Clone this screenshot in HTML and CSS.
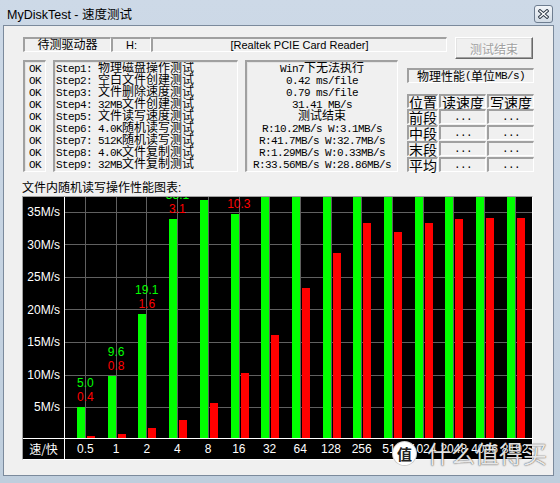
FILE: index.html
```html
<!DOCTYPE html>
<html lang="zh-CN">
<head>
<meta charset="utf-8">
<title>MyDiskTest - 速度测试</title>
<link rel="stylesheet" href="styles.css">
</head>
<body>
<div class="window">
  <div class="titlebar">
    <span class="title">MyDiskTest - 速度测试</span>
    <span class="close"><svg width="11" height="10" viewBox="0 0 11 10"><path d="M2 2L9 8M9 2L2 8" stroke="#2e3a48" stroke-width="3.4" stroke-linecap="square"/><path d="M2 2L9 8M9 2L2 8" stroke="#fff" stroke-width="1.4" stroke-linecap="square"/></svg></span>
  </div>
  <div class="client">
    <div class="row1">
      <div class="sunk lbl l1">待测驱动器</div>
      <div class="sunk lbl l2">H:</div>
      <div class="sunk lbl l3">[Realtek PCIE Card Reader]</div>
      <div class="btn">测试结束</div>
    </div>
    <div class="row2">
      <div class="box okbox mono">
        <div class="ln">OK</div><div class="ln">OK</div><div class="ln">OK</div>
        <div class="ln">OK</div><div class="ln">OK</div><div class="ln">OK</div>
        <div class="ln">OK</div><div class="ln">OK</div><div class="ln">OK</div>
      </div>
      <div class="box steps mono">
        <div class="ln">Step1: <span class="c">物理磁盘操作测试</span></div>
        <div class="ln">Step2: <span class="c">空白文件创建测试</span></div>
        <div class="ln">Step3: <span class="c">文件删除速度测试</span></div>
        <div class="ln">Step4: 32MB<span class="c">文件创建测试</span></div>
        <div class="ln">Step5: <span class="c">文件读写速度测试</span></div>
        <div class="ln">Step6: 4.0K<span class="c">随机读写测试</span></div>
        <div class="ln">Step7: 512K<span class="c">随机读写测试</span></div>
        <div class="ln">Step8: 4.0K<span class="c">文件复制测试</span></div>
        <div class="ln">Step9: 32MB<span class="c">文件复制测试</span></div>
      </div>
      <div class="box results mono">
        <div class="ln">Win7<span class="c">下无法执行</span></div>
        <div class="ln">0.42 ms/file</div>
        <div class="ln">0.79 ms/file</div>
        <div class="ln">31.41 MB/s</div>
        <div class="ln"><span class="c">测试结束</span></div>
        <div class="ln">R:10.2MB/s W:3.1MB/s</div>
        <div class="ln">R:41.7MB/s W:32.7MB/s</div>
        <div class="ln">R:1.29MB/s W:0.33MB/s</div>
        <div class="ln">R:33.56MB/s W:28.86MB/s</div>
      </div>
      <div class="phys">
        <div class="sunk physlbl mono"><span class="c">物理性能</span>(<span class="c">单位</span>MB/s)</div>
        <div class="ptable">
          <div class="sunk th left">位置</div>
          <div class="sunk th">读速度</div>
          <div class="sunk th">写速度</div>
          <div class="sunk th left">前段</div>
          <div class="sunk td mono">...</div>
          <div class="sunk td mono">...</div>
          <div class="sunk th left">中段</div>
          <div class="sunk td mono">...</div>
          <div class="sunk td mono">...</div>
          <div class="sunk th left">末段</div>
          <div class="sunk td mono">...</div>
          <div class="sunk td mono">...</div>
          <div class="sunk th left">平均</div>
          <div class="sunk td mono">...</div>
          <div class="sunk td mono">...</div>
        </div>
      </div>
    </div>
    <div class="ctitle">文件内随机读写操作性能图表:</div>
    <div class="chart">
      <div class="ylabs">
        <div>35M/s</div><div>30M/s</div><div>25M/s</div><div>20M/s</div>
        <div>15M/s</div><div>10M/s</div><div>5M/s</div>
      </div>
      <div class="vaxis"></div>
      <div class="plot">
        <div class="col"><div class="lab gv">5.0</div><div class="lab rv">0.4</div><div class="bars" style="height:31px"><div class="bar g"></div><div class="bar r" style="height:2px"></div></div></div>
        <div class="col"><div class="lab gv">9.6</div><div class="lab rv">0.8</div><div class="bars" style="height:62px"><div class="bar g"></div><div class="bar r" style="height:4px"></div></div></div>
        <div class="col"><div class="lab gv">19.1</div><div class="lab rv">1.6</div><div class="bars" style="height:124px"><div class="bar g"></div><div class="bar r" style="height:10px"></div></div></div>
        <div class="col"><div class="lab gv">33.1</div><div class="lab rv">3.1</div><div class="bars" style="height:219px"><div class="bar g"></div><div class="bar r" style="height:18px"></div></div></div>
        <div class="col"><div class="lab gv"></div><div class="lab rv"></div><div class="bars" style="height:238px"><div class="bar g"></div><div class="bar r" style="height:35px"></div></div></div>
        <div class="col"><div class="lab gv"></div><div class="lab rv">10.3</div><div class="bars" style="height:224px"><div class="bar g"></div><div class="bar r" style="height:65px"></div></div></div>
        <div class="col"><div class="bars" style="height:241px"><div class="bar g"></div><div class="bar r" style="height:103px"></div></div></div>
        <div class="col"><div class="bars" style="height:241px"><div class="bar g"></div><div class="bar r" style="height:150px"></div></div></div>
        <div class="col"><div class="bars" style="height:241px"><div class="bar g"></div><div class="bar r" style="height:185px"></div></div></div>
        <div class="col"><div class="bars" style="height:241px"><div class="bar g"></div><div class="bar r" style="height:215px"></div></div></div>
        <div class="col"><div class="bars" style="height:241px"><div class="bar g"></div><div class="bar r" style="height:206px"></div></div></div>
        <div class="col"><div class="bars" style="height:241px"><div class="bar g"></div><div class="bar r" style="height:215px"></div></div></div>
        <div class="col"><div class="bars" style="height:241px"><div class="bar g"></div><div class="bar r" style="height:219px"></div></div></div>
        <div class="col"><div class="bars" style="height:241px"><div class="bar g"></div><div class="bar r" style="height:220px"></div></div></div>
        <div class="col"><div class="bars" style="height:241px"><div class="bar g"></div><div class="bar r" style="height:220px"></div></div></div>
      </div>
      <div class="haxis"></div>
      <div class="corner">速/快</div>
      <div class="xlabs">
        <div>0.5</div><div>1</div><div>2</div><div>4</div><div>8</div><div>16</div><div>32</div><div>64</div>
        <div>128</div><div>256</div><div>512</div><div>1024</div><div>2048</div><div>4096</div><div>8192</div>
      </div>
    </div>
  </div>
  <div class="wm">
    <span class="wm-logo">值</span>
    <span class="wm-text">什么值得买</span>
  </div>
</div>
</body>
</html>
```
FILE: styles.css
```css
* { box-sizing: border-box; margin: 0; padding: 0; }
html, body { width: 560px; height: 483px; overflow: hidden; background: #c4d2e1; }
body { font-family: "Liberation Sans", "Noto Sans CJK SC", sans-serif; font-size: 12px; color: #000; }

.window {
  position: relative;
  width: 560px; height: 483px;
  display: flex; flex-direction: column;
  background: linear-gradient(#cdd9e7, #bfcedd);
}
.titlebar {
  height: 25px; flex: none;
  display: flex; align-items: center;
  padding: 0 7px;
}
.title { flex: 1; font-size: 12.5px; padding-top: 2px; }
.close {
  width: 19px; height: 18px; margin-top: 3px;
  border: 1px solid #6e7d90; border-radius: 3px;
  background: linear-gradient(#f2f5f9, #d2dbe5);
  display: flex; align-items: center; justify-content: center;
}

.client {
  flex: 1;
  margin: 0 6px 7px 3px;
  border: 1px solid #7b8a9c;
  background: #f0f0f0;
  padding: 11px 0 0 18px;
}

.sunk {
  border-style: solid;
  border-width: 2px 1px 1px 2px;
  border-color: #a0a0a0 #fff #fff #a0a0a0;
}

.row1 { display: flex; align-items: flex-start; height: 22px; margin-left: 1px; }
.lbl {
  height: 15px; line-height: 12px;
  display: flex; align-items: center; justify-content: center;
  font-size: 12px; white-space: nowrap;
}
.l1 { width: 88px; }
.l2 { width: 40px; font-size: 11px; }
.l3 { width: 296px; font-size: 11px; }
.btn {
  margin-left: 8px; width: 78px; height: 22px;
  border: 1px solid; border-color: #fff #696969 #696969 #fff;
  box-shadow: inset -1px -1px #a0a0a0, inset 1px 1px #e3e3e3;
  background: #f0f0f0;
  color: #a0a0a0; text-shadow: 1px 1px #fff;
  display: flex; align-items: center; justify-content: center;
  font-size: 12px;
}

.mono {
  font-family: "Liberation Mono", "Noto Sans CJK SC", monospace;
  font-size: 11px; letter-spacing: -0.6px; line-height: 12px;
}
.c { font-family: "Noto Sans CJK SC", sans-serif; font-size: 12px; letter-spacing: 0; line-height: 0; }

.row2 { display: flex; height: 112px; margin: 1px 0 0 1px; }
.box {
  height: 112px;
  border-style: solid; border-width: 2px 1px 1px 2px;
  border-color: #a0a0a0 #fff #fff #a0a0a0;
  box-shadow: inset 1px 1px #e3e3e3;
  padding-top: 1px;
  white-space: nowrap; overflow: hidden;
}
.ln { height: 12px; }
.okbox { width: 23px; text-align: center; }
.steps { width: 185px; margin-left: 7px; padding-left: 1px; }
.results { width: 153px; margin-left: 7px; text-align: center; }

.phys { width: 127px; margin-left: 9px; }
.physlbl {
  margin-top: 8px; height: 15px;
  display: flex; align-items: center; justify-content: center;
  white-space: nowrap;
}
.ptable {
  margin-top: 11px;
  display: grid;
  grid-template-columns: 31px 47px 47px;
  grid-template-rows: 14px repeat(4, 15px);
  column-gap: 1px; row-gap: 1px;
}
.th {
  font-family: "Noto Sans CJK SC", sans-serif; font-size: 14px; line-height: 12px;
  display: flex; align-items: center; justify-content: center;
  white-space: nowrap; overflow: visible;
}
.th.left { justify-content: flex-start; }
.td { display: flex; align-items: center; justify-content: center; line-height: 10px; }

.ctitle { margin-top: 9px; height: 14px; line-height: 14px; font-size: 12px; }

.chart {
  margin-top: 1px;
  width: 511px; height: 264px;
  border: 1px solid; border-color: #a0a0a0 #fff #fff #a0a0a0;
  background: #000;
  display: grid;
  grid-template-columns: 41px 1px 467px;
  grid-template-rows: 241px 1px 20px;
  color: #fff;
}
.ylabs { grid-row: 1; grid-column: 1; padding: 9px 4px 0 0; text-align: right; }
.ylabs div { height: 32.5px; line-height: 13px; font-size: 12px; }
.vaxis { grid-row: 1 / 4; grid-column: 2; background: #fff; }
.haxis { grid-row: 2; grid-column: 1 / 4; background: #fff; }
.plot {
  grid-row: 1; grid-column: 3;
  overflow: hidden;
  display: flex; padding-left: 5px;
  background: linear-gradient(to bottom,
    transparent 15px, #606060 15px 16px,
    transparent 16px 47px, #606060 47px 48px,
    transparent 48px 80px, #606060 80px 81px,
    transparent 81px 112px, #606060 112px 113px,
    transparent 113px 145px, #606060 145px 146px,
    transparent 146px 178px, #606060 178px 179px,
    transparent 179px 210px, #606060 210px 211px,
    transparent 211px);
}
.col {
  flex: none; width: 30.71px; height: 100%;
  display: flex; flex-direction: column; justify-content: flex-end;
  background: linear-gradient(to right, transparent 15px, #606060 15px 16px, transparent 16px);
}
.lab { flex: none; height: 13px; line-height: 13px; text-align: center; font-size: 12px; white-space: nowrap; }
.gv { color: #00ff00; margin-bottom: 1px; }
.rv { color: #ff0000; margin-bottom: 3px; }
.bars { flex: none; display: flex; align-items: flex-end; gap: 2px; padding-left: 7px; }
.bar { width: 8px; flex: none; }
.bar.g { height: 100%; background: #00ff00; }
.bar.r { background: #ff0000; }

.corner {
  grid-row: 3; grid-column: 1;
  text-align: center; line-height: 20px;
  font-family: "Noto Sans CJK SC", sans-serif; font-size: 12px;
}
.xlabs { grid-row: 3; grid-column: 3; display: flex; padding-left: 5px; }
.xlabs div { flex: none; width: 30.71px; text-align: center; line-height: 20px; font-size: 12px; white-space: nowrap; }

.wm {
  position: absolute; left: 392px; top: 440px;
  display: flex; align-items: center; gap: 10px;
}
.wm-logo {
  width: 25px; height: 25px; border-radius: 50%;
  background: #fff; border: 1px solid rgba(0,0,0,0.2);
  color: #222; font-family: "Noto Sans CJK SC", sans-serif; font-weight: bold; font-size: 15px;
  display: flex; align-items: center; justify-content: center;
}
.wm-text {
  font-family: "Noto Sans CJK SC", sans-serif; font-size: 24px; line-height: 26px;
  color: rgba(255,255,255,0.88);
  text-shadow: 0 0 1px rgba(0,0,0,0.7), 0 0 2px rgba(0,0,0,0.35);
}
```
